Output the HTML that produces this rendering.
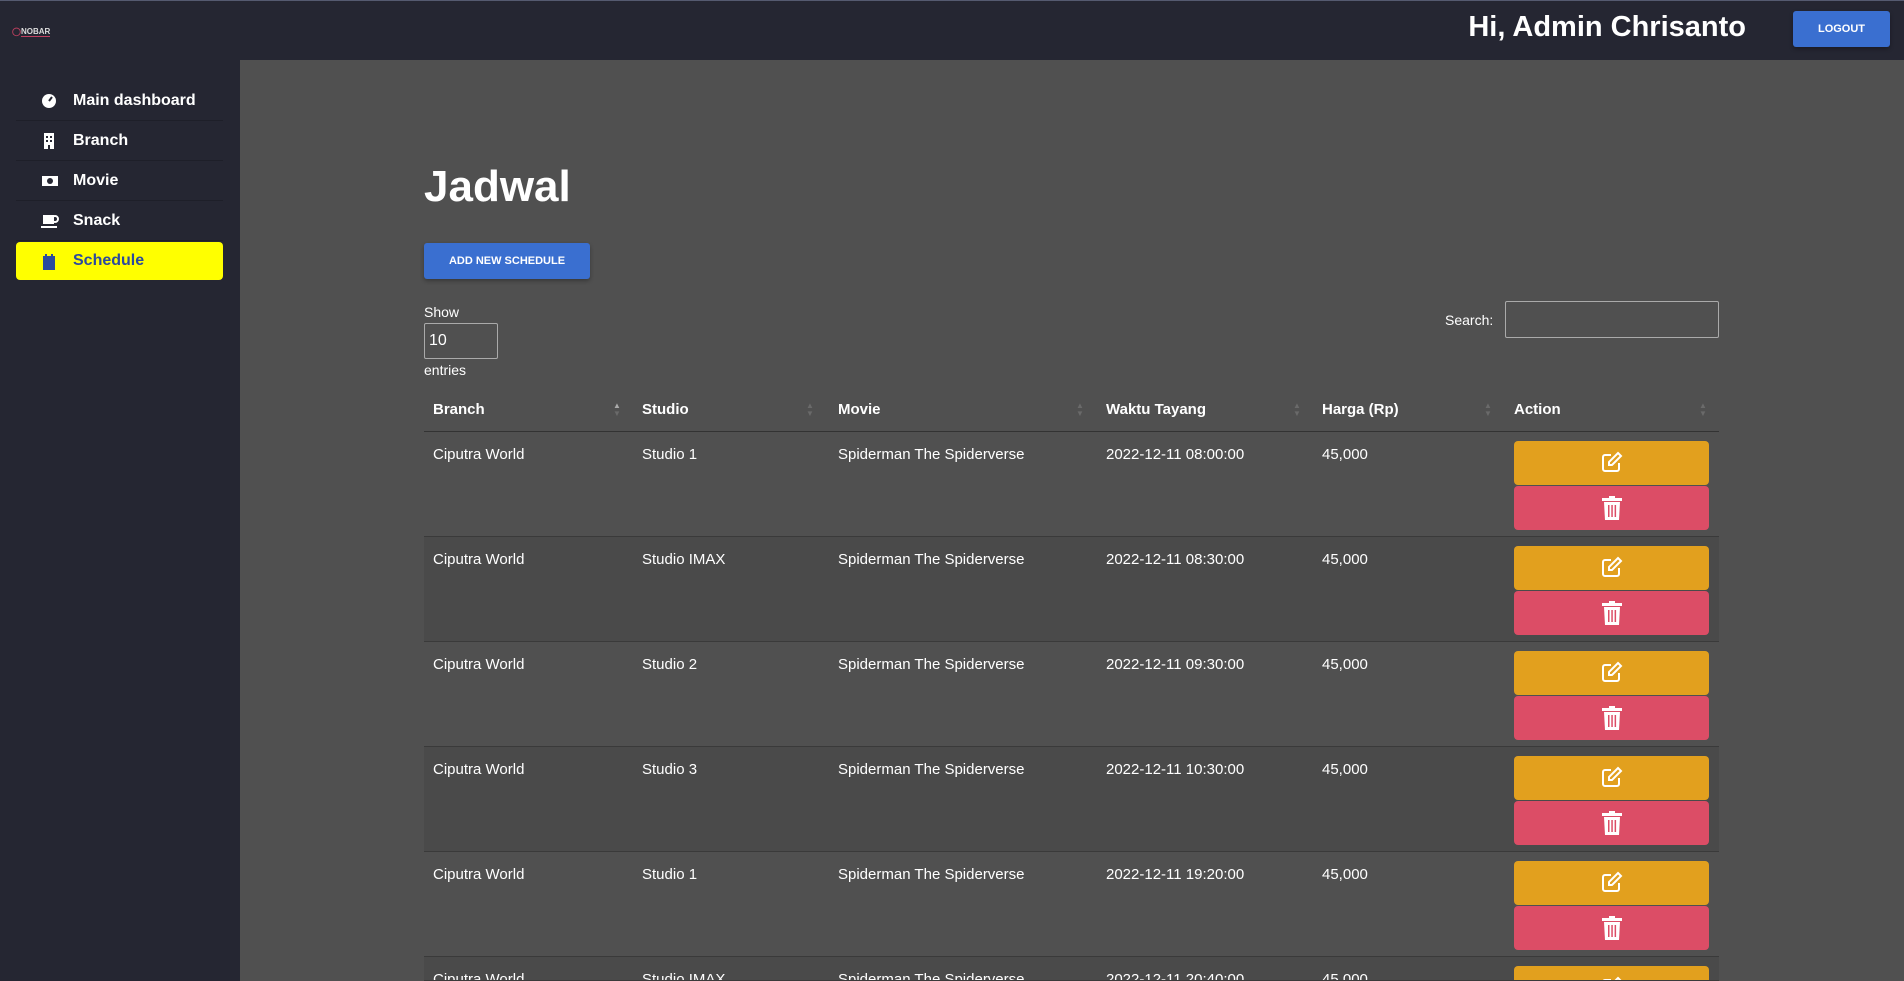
<!DOCTYPE html>
<html style="width:1904px;height:981px;overflow:hidden"><head><style>
*{box-sizing:border-box;margin:0;padding:0}
body{width:1904px;height:981px;overflow:hidden;background:#505050;font-family:"Liberation Sans",sans-serif;color:#fff;position:relative}
.hdr{position:absolute;left:0;top:0;width:1904px;height:60px;background:#252632;border-top:1px solid #555a70}
.side{position:absolute;left:0;top:60px;width:240px;height:921px;background:#252632}
.nav{position:absolute;left:16px;width:207px;height:40px;font-weight:bold;font-size:16px;line-height:40px;padding-left:57px;border-bottom:1px solid #1e1f29}
.nav svg{position:absolute;left:25px;top:12px}
.act{background:#ffff00;color:#2b4a9e;border-radius:4px;border:none}
.t{position:absolute;white-space:nowrap}
.btn{position:absolute;background:#3a6fd0;border-radius:3px;font-weight:bold;font-size:11px;text-align:center;box-shadow:0 2px 4px rgba(0,0,0,.3)}
.clip{position:absolute;left:0;top:0;width:1904px;height:981px;overflow:hidden}
.row{position:absolute;left:424px;width:1295px;height:105px;border-bottom:1px solid #3a3a3a;font-size:15px}
.row span{position:absolute;top:14px}
.e,.d{position:absolute;left:1090px;width:195px;height:44px;border-radius:4px}
.e{top:9px;background:#e2a01e}
.d{top:54px;background:#dc4d66}
.e svg,.d svg{position:absolute;left:87px;top:10px}
.h{position:absolute;top:401px;font-weight:bold;font-size:15px}
.ar{position:absolute;top:402px;color:#6a6a6a;font-size:8px;line-height:8px}
</style></head><body>
<div class="clip">
<div class="hdr">
 <div class="t" style="left:12px;top:26px;font-size:8px;font-weight:bold;color:#c04060">◯<span style="color:#ddd;border-bottom:1px solid #c04060">NOBAR</span></div>
 <div class="t" style="right:158px;top:10px;font-size:29px;font-weight:bold">Hi, Admin Chrisanto</div>
 <div class="btn" style="left:1793px;top:10px;width:97px;height:36px;line-height:36px">LOGOUT</div>
</div>
<div class="side">
 <div class="nav" style="top:21px"><svg width="16" height="16"><circle cx="8" cy="8" r="7" fill="#fff"/><path d="M8 8L11 4" stroke="#252632" stroke-width="2"/></svg>Main dashboard</div>
 <div class="nav" style="top:61px"><svg width="16" height="16"><rect x="3" y="0" width="10" height="16" fill="#fff"/><rect x="5" y="3" width="2" height="2" fill="#252632"/><rect x="9" y="3" width="2" height="2" fill="#252632"/><rect x="5" y="7" width="2" height="2" fill="#252632"/><rect x="9" y="7" width="2" height="2" fill="#252632"/><rect x="7" y="12" width="2" height="4" fill="#252632"/></svg>Branch</div>
 <div class="nav" style="top:101px"><svg width="18" height="16"><rect x="1" y="3" width="16" height="10" fill="#fff"/><circle cx="9" cy="8" r="3" fill="#252632"/></svg>Movie</div>
 <div class="nav" style="top:141px"><svg width="18" height="16"><rect x="2" y="2" width="11" height="9" fill="#fff"/><circle cx="14" cy="6" r="3" fill="none" stroke="#fff" stroke-width="2"/><rect x="0" y="13" width="16" height="2" fill="#fff"/></svg>Snack</div>
 <div class="nav act" style="top:182px;height:38px;line-height:38px"><svg width="16" height="16"><rect x="2" y="2" width="12" height="14" fill="#2b4a9e"/><rect x="4" y="0" width="2" height="3" fill="#2b4a9e"/><rect x="10" y="0" width="2" height="3" fill="#2b4a9e"/></svg>Schedule</div>
</div>
<div class="t" style="left:424px;top:162px;font-size:44px;font-weight:bold">Jadwal</div>
<div class="btn" style="left:424px;top:243px;width:166px;height:36px;line-height:36px">ADD NEW SCHEDULE</div>
<div class="t" style="left:424px;top:304px;font-size:14px">Show</div>
<div style="position:absolute;left:424px;top:323px;width:74px;height:36px;border:1px solid #aaa;border-radius:2px;font-size:16px;padding:8px 4px">10</div>
<div class="t" style="left:424px;top:362px;font-size:14px">entries</div>
<div class="t" style="left:1445px;top:312px;font-size:14px">Search:</div>
<div style="position:absolute;left:1505px;top:301px;width:214px;height:37px;border:1px solid #aaa;border-radius:2px"></div>
<div style="position:absolute;left:424px;top:431px;width:1295px;height:1px;background:#333"></div>
<div class="h" style="left:433px">Branch</div><div class="ar" style="left:613px;color:#aaa">▲<br><span style="color:#6a6a6a">▼</span></div>
<div class="h" style="left:642px">Studio</div><div class="ar" style="left:806px">▲<br>▼</div>
<div class="h" style="left:838px">Movie</div><div class="ar" style="left:1076px">▲<br>▼</div>
<div class="h" style="left:1106px">Waktu Tayang</div><div class="ar" style="left:1293px">▲<br>▼</div>
<div class="h" style="left:1322px">Harga (Rp)</div><div class="ar" style="left:1484px">▲<br>▼</div>
<div class="h" style="left:1514px">Action</div><div class="ar" style="left:1699px">▲<br>▼</div>
<div id="rows"></div>
</div>
<script>
var d=[["Studio 1","08:00:00"],["Studio IMAX","08:30:00"],["Studio 2","09:30:00"],["Studio 3","10:30:00"],["Studio 1","19:20:00"],["Studio IMAX","20:40:00"]];
var ed='<svg width="22" height="22" viewBox="0 0 22 22" fill="none" stroke="#fff" stroke-width="2"><path d="M10 4H4a2 2 0 0 0-2 2v12a2 2 0 0 0 2 2h12a2 2 0 0 0 2-2v-6"/><path d="M17 2l3 3-9 9H8v-3z"/></svg>';
var tr='<svg width="22" height="24" viewBox="0 0 22 24" fill="#fff"><rect x="1" y="2" width="20" height="3"/><rect x="8" y="0" width="6" height="3"/><path d="M3 6h16l-1 18H4z"/><rect x="7" y="9" width="1.5" height="12" fill="#dc4d66"/><rect x="10.3" y="9" width="1.5" height="12" fill="#dc4d66"/><rect x="13.6" y="9" width="1.5" height="12" fill="#dc4d66"/></svg>';
var h='';d.forEach(function(r,i){var top=432+i*105;h+='<div class="row" style="top:'+top+'px;height:'+Math.min(105,981-top)+'px;overflow:hidden;background:'+(i%2?'#4a4a4a':'#505050')+'"><span style="left:9px">Ciputra World</span><span style="left:218px">'+r[0]+'</span><span style="left:414px">Spiderman The Spiderverse</span><span style="left:682px">2022-12-11 '+r[1]+'</span><span style="left:898px">45,000</span><div class="e">'+ed+'</div><div class="d">'+tr+'</div></div>'});
document.getElementById('rows').innerHTML=h;
</script>
</body></html>
